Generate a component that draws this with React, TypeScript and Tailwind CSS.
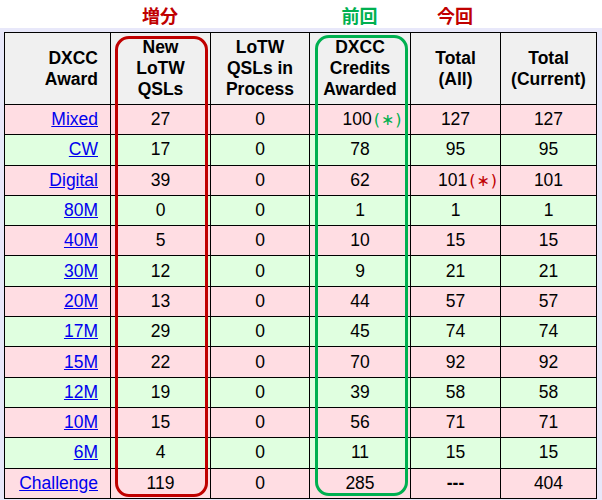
const ROWS = [
  { band: "Mixed", newQ: "27", proc: "0", credits: "100", cMark: true, all: "127", allMark: false, cur: "127" },
  { band: "CW", newQ: "17", proc: "0", credits: "78", all: "95", cur: "95" },
  { band: "Digital", newQ: "39", proc: "0", credits: "62", all: "101", allMark: true, cur: "101" },
  { band: "80M", newQ: "0", proc: "0", credits: "1", all: "1", cur: "1" },
  { band: "40M", newQ: "5", proc: "0", credits: "10", all: "15", cur: "15" },
  { band: "30M", newQ: "12", proc: "0", credits: "9", all: "21", cur: "21" },
  { band: "20M", newQ: "13", proc: "0", credits: "44", all: "57", cur: "57" },
  { band: "17M", newQ: "29", proc: "0", credits: "45", all: "74", cur: "74" },
  { band: "15M", newQ: "22", proc: "0", credits: "70", all: "92", cur: "92" },
  { band: "12M", newQ: "19", proc: "0", credits: "39", all: "58", cur: "58" },
  { band: "10M", newQ: "15", proc: "0", credits: "56", all: "71", cur: "71" },
  { band: "6M", newQ: "4", proc: "0", credits: "11", all: "15", cur: "15" },
  { band: "Challenge", newQ: "119", proc: "0", credits: "285", all: "---", cur: "404" },
];

const cols = "grid grid-cols-[106px_100px_99px_101px_90px_96px]";

// the little "(*)" note mark after a number
function Mark({ color }: { color: string }) {
  return (
    <span className={`${color} text-[16px] font-['DejaVu_Sans',sans-serif] ml-[2px]`}>
      (<span className="mx-[1px]">∗</span>)
    </span>
  );
}

export default function App() {
  return (
    <div className="relative w-[602px] h-[500px] bg-white font-['Liberation_Sans',Arial,sans-serif] text-[17.5px] text-black overflow-hidden">
      {/* labels above the table */}
      <div className={`${cols} h-[28px] pl-[4px] pt-[2px] items-center font-bold text-[18px] leading-none font-['Noto_Sans_CJK_JP',sans-serif]`}>
        <div />
        <div className="text-center text-[#c00000]">増分</div>
        <div />
        <div className="text-center text-[#00b050]">前回</div>
        <div className="text-center text-[#c00000]">今回</div>
        <div />
      </div>

      <div className="bg-[#e8e8fa] pl-[4px] pt-[4px] h-[472px]">
        <table className="border-collapse border border-black table-fixed leading-[21px]">
          <colgroup>
            <col className="w-[106px]" />
            <col className="w-[100px]" />
            <col className="w-[99px]" />
            <col className="w-[101px]" />
            <col className="w-[90px]" />
            <col className="w-[96px]" />
          </colgroup>
          <thead>
            <tr className="h-[72px] bg-[#f0f0f0] font-bold">
              <th className="border border-black text-right pr-[12px]">DXCC<br />Award</th>
              <th className="border border-black text-center">New<br />LoTW<br />QSLs</th>
              <th className="border border-black text-center">LoTW<br />QSLs in<br />Process</th>
              <th className="border border-black text-center">DXCC<br />Credits<br />Awarded</th>
              <th className="border border-black text-center">Total<br />(All)</th>
              <th className="border border-black text-center">Total<br />(Current)</th>
            </tr>
          </thead>
          <tbody>
            {ROWS.map((r, i) => (
              <tr key={r.band} className={`h-[30.3px] ${i % 2 === 0 ? "bg-[#ffdde3]" : "bg-[#e0ffe0]"}`}>
                <td className="border border-black text-right pr-[12px]">
                  <a href="#" className="text-[#0000ee] underline">{r.band}</a>
                </td>
                <td className="border border-black text-center">{r.newQ}</td>
                <td className="border border-black text-center">{r.proc}</td>
                <td className="border border-black text-center">
                  {r.cMark ? (
                    <span className="pl-[24px]">
                      {r.credits}
                      <Mark color="text-[#00b050]" />
                    </span>
                  ) : (
                    r.credits
                  )}
                </td>
                <td className={`border border-black text-center ${r.all === "---" ? "font-bold" : ""}`}>
                  {r.allMark ? (
                    <span className="pl-[24px]">
                      {r.all}
                      <Mark color="text-[#c00000]" />
                    </span>
                  ) : (
                    r.all
                  )}
                </td>
                <td className="border border-black text-center">{r.cur}</td>
              </tr>
            ))}
          </tbody>
        </table>
      </div>

      {/* highlight frames over the columns */}
      <div className="absolute left-[115px] top-[36px] w-[93px] h-[461px] border-[3px] border-[#c00000] rounded-[14px] pointer-events-none" />
      <div className="absolute left-[315px] top-[35px] w-[93px] h-[461px] border-[3px] border-[#00b050] rounded-[14px] pointer-events-none" />
    </div>
  );
}
